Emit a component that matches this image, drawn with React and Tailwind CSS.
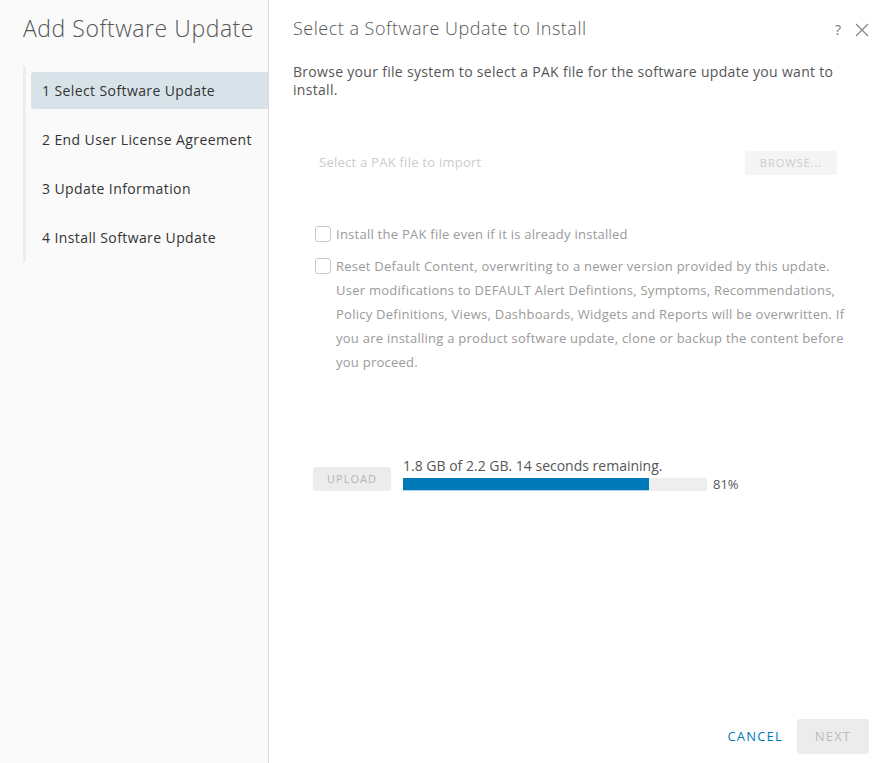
import React from "react";

const steps = [
  "1 Select Software Update",
  "2 End User License Agreement",
  "3 Update Information",
  "4 Install Software Update",
];

const font = { fontFamily: '"Open Sans", "Liberation Sans", sans-serif' };

const Checkbox = () => (
  <span className="mt-[4px] h-[16px] w-[16px] shrink-0 rounded-[3px] border border-[#c8c8c8] bg-white" />
);

export default function App() {
  return (
    <div
      className="flex h-[763px] w-[886px] overflow-hidden bg-white text-[#565656]"
      style={font}
    >
      {/* sidebar */}
      <aside className="flex w-[269px] shrink-0 flex-col border-r border-[#dcdcdc] bg-[#fafafa]">
        <h1 className="pl-[23px] pt-[13px] text-[23px] font-light leading-[30px] tracking-[0.55px] text-[#565656]">
          Add Software Update
        </h1>
        <nav className="ml-[23px] mt-[23px] border-l-[3px] border-[#eeeeee] pl-[5px] pt-[6px]">
          {steps.map((s, i) => (
            <div
              key={i}
              className={
                "flex h-[37px] items-center rounded-l-[3px] pl-[11px] text-[14px] tracking-[0.4px] text-[#333] mb-[12px] last:mb-[6px] " +
                (i === 0 ? "bg-[#d8e3e9]" : "")
              }
            >
              {s}
            </div>
          ))}
        </nav>
      </aside>

      {/* main */}
      <main className="relative flex flex-1 flex-col pl-[24px] pr-[17px]">
        <div className="flex h-[40px] items-start justify-between pt-[16px]">
          <h2 className="text-[18px] font-light leading-[24px] tracking-[0.5px] text-[#565656]">
            Select a Software Update to Install
          </h2>
          <div className="flex h-[24px] items-center gap-[14px] pt-[4px] text-[#777]">
            <span className="text-[14px] leading-[14px]">?</span>
            <svg width="14" height="14" viewBox="0 0 14 14" stroke="#888" strokeWidth="1.3">
              <path d="M1 1 L13 13 M13 1 L1 13" />
            </svg>
          </div>
        </div>

        <p className="mt-[23px] w-[570px] text-[14px] leading-[18px] tracking-[0.3px] text-[#565656]">
          Browse your file system to select a PAK file for the software update you want to install.
        </p>

        <div className="mt-[52px] flex items-center justify-between pl-[26px] pr-[32px]">
          <span className="text-[13px] tracking-[0.25px] text-[#cccccc]">Select a PAK file to import</span>
          <button className="h-[24px] w-[92px] rounded-[3px] bg-[#f4f4f4] text-[11px] tracking-[1px] text-[#cccccc]">
            BROWSE...
          </button>
        </div>

        <div className="mt-[47px] flex flex-col gap-[8px] pl-[22px] pr-[20px] text-[13px] leading-[24px] tracking-[0.25px] text-[#9a9a9a]">
          <label className="flex gap-[5px]">
            <Checkbox />
            <span>Install the PAK file even if it is already installed</span>
          </label>
          <label className="flex gap-[5px]">
            <Checkbox />
            <span>
              Reset Default Content, overwriting to a newer version provided by this update. User
              modifications to DEFAULT Alert Defintions, Symptoms, Recommendations, Policy
              Definitions, Views, Dashboards, Widgets and Reports will be overwritten. If you are
              installing a product software update, clone or backup the content before you proceed.
            </span>
          </label>
        </div>

        <div className="mt-[83px] flex items-end gap-[12px] pl-[20px]">
          <button className="h-[24px] w-[78px] rounded-[3px] bg-[#ececec] text-[11px] tracking-[1px] text-[#b4b4b4]">
            UPLOAD
          </button>
          <div className="flex flex-col">
            <span className="text-[14px] leading-[18px] text-[#565656]">
              1.8 GB of 2.2 GB. 14 seconds remaining.
            </span>
            <div className="mt-[3px] flex items-center gap-[6px]">
              <div className="h-[13px] w-[304px] bg-[#eeeeee]">
                <div className="h-full border-b border-[#a9d4ee] bg-[#0079b8]" style={{ width: "81%" }} />
              </div>
              <span className="text-[13px] leading-[13px] text-[#565656]">81%</span>
            </div>
          </div>
        </div>

        <div className="mt-auto mb-[9px] flex items-center justify-end gap-[14px]">
          <button className="text-[13px] tracking-[1.2px] text-[#0079b8]">CANCEL</button>
          <button className="h-[35px] w-[72px] rounded-[3px] bg-[#ececec] text-[13px] tracking-[1.2px] text-[#bdbdbd]">
            NEXT
          </button>
        </div>
      </main>
    </div>
  );
}
